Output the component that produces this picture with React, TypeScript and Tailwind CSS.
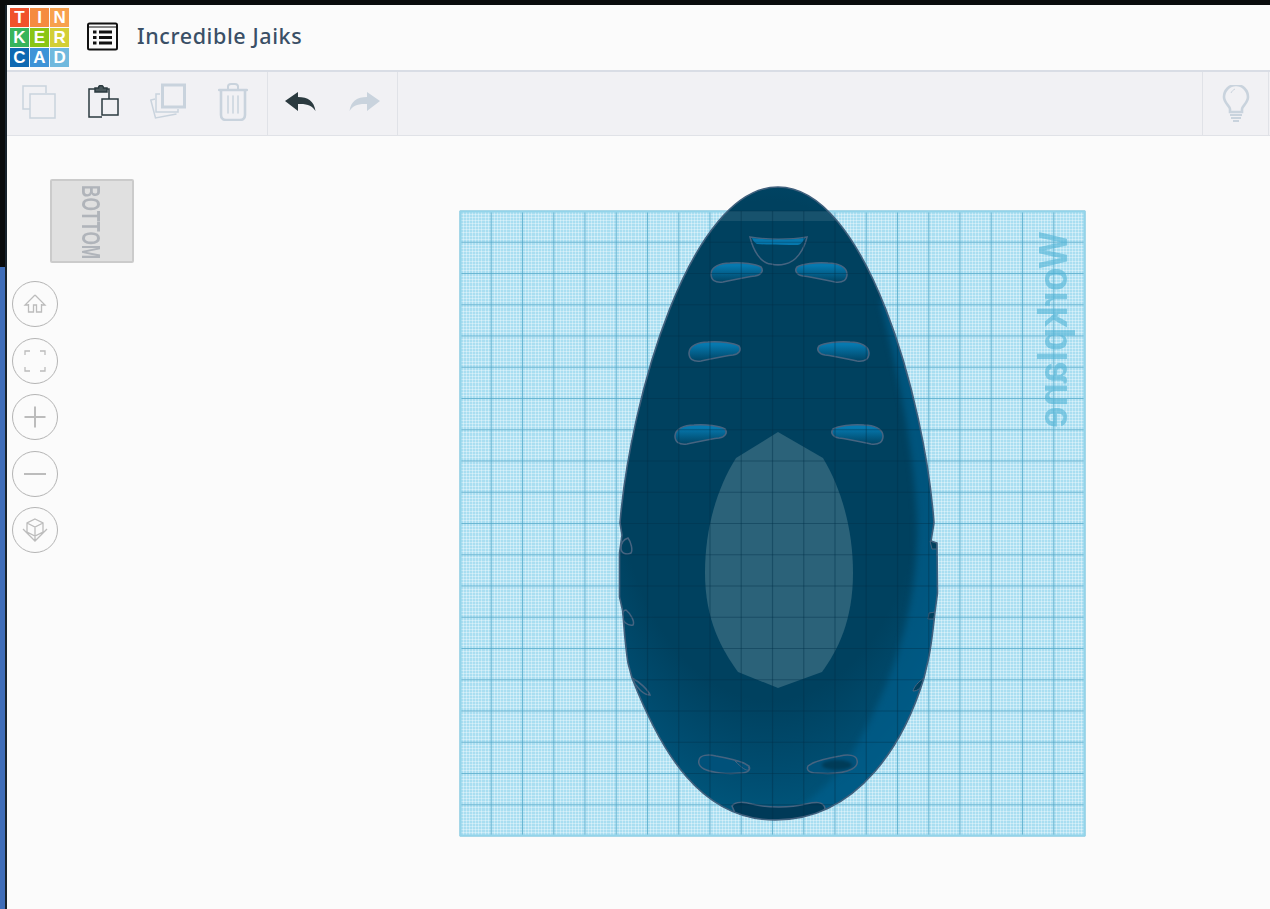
import React from 'react';

const logoCells = [
  ['T', 'bg-[#f0512b]'], ['I', 'bg-[#f58b3f]'], ['N', 'bg-[#f8a14c]'],
  ['K', 'bg-[#37b45c]'], ['E', 'bg-[#8ac513]'], ['R', 'bg-[#d3cf36]'],
  ['C', 'bg-[#0d68b2]'], ['A', 'bg-[#3e93d7]'], ['D', 'bg-[#70b9de]'],
];

const disabled = '#c9d3dd';
const active = '#2b3a3f';

function CopyIcon() {
  return (
    <svg width="34" height="34" viewBox="0 0 34 34" fill="none" stroke={disabled} strokeWidth="1.500">
      <path d="M8 24H1V1h23v7" />
      <rect x="8" y="9" width="25" height="24" />
    </svg>
  );
}

function PasteIcon() {
  return (
    <svg width="31" height="34" viewBox="0 0 31 34" fill="none" stroke={active} strokeWidth="1.500">
      <path d="M14 32H1V4h20v10" />
      <path d="M7 7V3h3.500a2.500 2.500 0 0 1 5 0H19v4z" fill="#4a585c" />
      <rect x="14" y="14" width="16" height="16" fill="#f1f1f4" />
    </svg>
  );
}

function DuplicateIcon() {
  return (
    <svg width="36" height="38" viewBox="0 0 36 38" fill="none" stroke={disabled}>
      <rect x="12.500" y="2" width="22" height="22" strokeWidth="3" />
      <path d="M10 11H6v18h22v-3" strokeWidth="1.500" />
      <path d="M5 16 0.800 17l4.700 18 21-4" strokeWidth="1.500" />
    </svg>
  );
}

function TrashIcon() {
  return (
    <svg width="30" height="38" viewBox="0 0 30 38" fill="none" stroke={disabled} strokeLinecap="round">
      <path d="M1 7h28" strokeWidth="2.400" />
      <path d="M10 6V3.500C10 2 11 1 13 1h4c2 0 3 1 3 2.500V6" strokeWidth="2" />
      <path d="M3 8v24c0 3 2 5 5 5h14c3 0 5-2 5-5V8" strokeWidth="2.600" />
      <path d="M10 13v17M15 13v17M20 13v17" strokeWidth="1.500" />
    </svg>
  );
}

function UndoIcon({ color }: { color: string }) {
  return (
    <svg width="31" height="20" viewBox="0 0 31 20" fill={color}>
      <path d="M0 9 13 0v5c10 0 16 4 17.500 14-3-5-8-7.500-17.500-7v7z" />
    </svg>
  );
}

function BulbIcon() {
  return (
    <svg width="28" height="38" viewBox="0 0 28 38" fill="none" stroke={disabled}>
      <path d="M8 27v-3c0-3-6-6-6-12a12 12 0 0 1 24 0c0 6-6 9-6 12v3z" strokeWidth="2.600" />
      <path d="M9 8c1-2 2-3 4-4" strokeWidth="1" />
      <path d="M8 30h12" strokeWidth="2" />
      <path d="M9 33h10" strokeWidth="2" />
      <path d="M11 36h6" strokeWidth="2" />
    </svg>
  );
}

function RoundButton({ children }: { children: React.ReactNode }) {
  return (
    <button className="w-[46px] h-[46px] rounded-full border border-[#b4b4b4] flex items-center justify-center bg-[#fbfbfb]">
      <svg width="28" height="28" viewBox="0 0 28 28" fill="none" stroke="#bcbcbc" strokeWidth="1.300">
        {children}
      </svg>
    </button>
  );
}

const bodyPath =
  'M778 187C866 187 925 400 934 523L931 541L937 543L937.500 593L935 612C932 640 930 655 927 665L924 678' +
  'C905 740 860 820 775 820C700 820 660 750 632 678L628 663C625 645 624 625 622.500 610L619.500 597L619.500 553' +
  'L622 535L620 523C630 400 690 187 778 187Z';

const crescentPath = 'M880 300C905 400 918 480 917 540C915 620 890 690 850 757C830 785 800 810 775 825L960 825L960 300Z';

const innerPath =
  'M778 432L736 458C716 490 705 530 705 573C705 620 722 650 738 672L778 688L822 672C838 650 853 620 853 573C853 530 842 490 823 458Z';

const dropPath = 'M711 274C711 267 720 263 730 263C742 262 756 264 761 267C764 271 761 275 755 276C745 277 733 280 723 282C715 283 711 280 711 274Z';
const drops = [
  [0, 0],
  [-22, 79],
  [-36, 162],
];

const cells = Array.from({ length: 21 }, (_, i) => i);
const minor = Array.from({ length: 201 }, (_, i) => i);

function Workplane() {
  return (
    <svg width="645" height="665" viewBox="450 180 645 665" className="ml-[336px] mt-[44px] shrink-0">
      <defs>
        <clipPath id="body">
          <path d={bodyPath} />
        </clipPath>
        <radialGradient id="shell" gradientUnits="userSpaceOnUse" cx="770" cy="450" r="390" gradientTransform="translate(770 450) scale(0.62 1) translate(-770 -450)">
          <stop offset="0.64" stopColor="#00415f" />
          <stop offset="0.85" stopColor="#004e72" />
          <stop offset="1" stopColor="#005a80" />
        </radialGradient>
        <linearGradient id="drop" x1="0" y1="0" x2="0" y2="1">
          <stop offset="0.15" stopColor="#0679af" />
          <stop offset="1" stopColor="#004464" />
        </linearGradient>
      </defs>

      {/* grid */}
      <rect x="460" y="211" width="625" height="625" fill="#a9def1" />
      <g stroke="#ffffff" strokeOpacity="0.34" strokeWidth="1" shapeRendering="crispEdges" className="blur-[0.4px]">
        {minor.map((i) => (
          <line key={`mv${i}`} x1={460 + i * 3.125} y1="211" x2={460 + i * 3.125} y2="836" />
        ))}
        {minor.map((i) => (
          <line key={`mh${i}`} x1="460" y1={211 + i * 3.125} x2="1085" y2={211 + i * 3.125} />
        ))}
      </g>
      <g stroke="#4ba4c6" strokeOpacity="0.75" strokeWidth="1">
        {cells.map((i) => (
          <line key={`v${i}`} x1={460 + i * 31.25} y1="211" x2={460 + i * 31.25} y2="836" />
        ))}
        {cells.map((i) => (
          <line key={`h${i}`} x1="460" y1={211 + i * 31.25} x2="1085" y2={211 + i * 31.25} />
        ))}
      </g>
      <rect x="460.500" y="211.500" width="624" height="624" fill="none" stroke="#93d4ea" strokeWidth="2" />
      <text
        transform="translate(1067 232) rotate(90) scale(1 -1)"
        fontFamily="'Liberation Sans', sans-serif"
        fontWeight="700"
        fontSize="40"
        textLength="196"
        lengthAdjust="spacingAndGlyphs"
        fill="#4fb2d6"
        fillOpacity="0.6"
        className="blur-[0.5px]"
      >
        Workplane
      </text>

      {/* body */}
      <path d={bodyPath} fill="url(#shell)" />
      <g clipPath="url(#body)">
        <path d={crescentPath} fill="#00608e" fillOpacity="0.65" className="blur-[3px]" />
        <rect x="460" y="211" width="625" height="10" fill="#ffffff" fillOpacity="0.09" />
        <path d={innerPath} fill="#2b6279" />

        {/* holes */}
        {drops.map(([x, y]) => (
          <g key={`d${y}`}>
            <path d={dropPath} transform={`translate(${x} ${y})`} fill="url(#drop)" stroke="#466480" strokeWidth="1.600" />
            <path d={dropPath} transform={`translate(1558 0) scale(-1 1) translate(${x} ${y})`} fill="url(#drop)" stroke="#466480" strokeWidth="1.600" />
          </g>
        ))}
        <path d="M750 237C753 250 761 264 771 264C775 265 781 265 785 264C796 262 804 250 807 237C790 240 767 240 750 237Z" fill="#004362" stroke="#466480" strokeWidth="1.500" />
        <path d="M752 238C768 240 788 240 805 238C803 242 800 245 798 245C785 245 770 245 757 244C755 243 753 241 752 238Z" fill="#0678ae" />
        <path d="M699 760C700 755 708 754 716 756C728 758 742 761 749 766C751 770 748 773 740 773C728 774 712 773 704 769C700 767 698 764 699 760Z" fill="#00517a" stroke="#466480" strokeWidth="1.500" />
        <path d="M735 761C742 761 750 765 749 770C746 771 742 768 735 761Z" fill="none" stroke="#466480" />
        <path d="M857 760C856 755 848 754 840 756C828 758 814 761 808 766C806 770 809 773 817 773C829 774 844 773 852 769C856 767 858 764 857 760Z" fill="#00517a" stroke="#466480" strokeWidth="1.500" />
        <ellipse cx="837" cy="765" rx="15" ry="5" fill="#003c58" className="blur-[1.5px]" />
        <path d="M732 806C735 801 745 802 752 804C768 808 790 808 806 804C815 802 823 801 825 808L820 820H738Z" fill="#003a58" stroke="#466480" strokeWidth="1.500" />
        <path d="M621 548C621 541 625 539 628 538C631 542 633 550 631 553C627 555 621 554 621 548Z" fill="none" stroke="#466480" strokeWidth="1.500" />
        <path d="M622 615C623 611 625 610 626 610C631 614 635 622 633 625C628 626 622 622 622 615Z" fill="none" stroke="#466480" strokeWidth="1.500" />
        <path d="M632 678C640 682 648 690 650 695C644 695 636 688 632 678Z" fill="none" stroke="#466480" strokeWidth="1.500" />
        <path d="M930 541L937 543L937 549L932 549Z" fill="#00405e" stroke="#466480" strokeWidth="1" />
        <path d="M929 613L935 612L934 619L928 619Z" fill="#00405e" stroke="#466480" strokeWidth="1" />
        <path d="M924 678C918 682 914 687 913 691C918 691 922 688 924 678Z" fill="#00405e" stroke="#466480" strokeWidth="1" />

        {/* grid seen through the body */}
        <g stroke="#002f48" strokeOpacity="0.4" strokeWidth="1.200">
          {cells.map((i) => (
            <line key={`bv${i}`} x1={460 + i * 31.25} y1="211" x2={460 + i * 31.25} y2="836" />
          ))}
          {cells.map((i) => (
            <line key={`bh${i}`} x1="460" y1={211 + i * 31.25} x2="1085" y2={211 + i * 31.25} />
          ))}
        </g>
      </g>
      <path d={bodyPath} fill="none" stroke="#40607d" strokeWidth="1.600" />
    </svg>
  );
}

export default function App() {
  return (
    <div className="flex h-[909px] w-[1270px] overflow-hidden bg-[#fbfbfb] font-['Noto_Sans',sans-serif]">
      {/* window edge */}
      <div className="w-[7px] shrink-0 flex flex-col bg-[#18232c]">
        <div className="h-[267px] w-[5px] bg-[#0a0c0d]" />
        <div className="flex-1 w-[5px] bg-[#3f6db8]" />
      </div>

      <div className="flex-1 flex flex-col min-w-0">
        <div className="h-[5px] bg-[#0a0c0d] -ml-[7px]" />

        {/* title bar */}
        <header className="h-[67px] flex items-center bg-[#fbfbfb] border-b-2 border-[#d9dde5]">
          <div className="ml-[3px] w-[59px] h-[59px] grid grid-cols-3 grid-rows-3 gap-[1.500px]">
            {logoCells.map(([letter, color]) => (
              <div key={letter} className={`${color} flex items-center justify-center text-white text-[17px] leading-none font-bold font-['Liberation_Sans',sans-serif]`}>
                {letter}
              </div>
            ))}
          </div>
          <button className="ml-[18px] mb-[3px]">
            <svg width="31" height="29" viewBox="0 0 31 29" fill="none" className="block">
              <rect x="1" y="1.500" width="29" height="26" rx="1.500" stroke="#111" strokeWidth="2" />
              <path d="M2 5h27" stroke="#111" strokeWidth="1" />
              <path d="M6 8.500h3.500v3H6zM6 14h3.500v3H6zM6 19.500h3.500v3H6z" fill="#111" />
              <path d="M12 8.500h13v3H12zM12 14h13v3H12zM12 19.500h13v3H12z" fill="#111" />
            </svg>
          </button>
          <h1 className="ml-[19px] mb-[3px] text-[21.5px] font-medium tracking-[0.6px] text-[#3a4f66]">Incredible Jaiks</h1>
        </header>

        {/* toolbar */}
        <div className="h-[64px] flex items-stretch bg-[#f1f1f4] border-b border-[#e0e2e7]">
          <div className="flex pr-[2px] pb-[3px] border-r border-[#e0e2e7]">
            <button className="w-[64.500px] flex items-center justify-center"><CopyIcon /></button>
            <button className="w-[64.500px] flex items-center justify-center"><PasteIcon /></button>
            <button className="w-[64.500px] flex items-center justify-center"><DuplicateIcon /></button>
            <button className="w-[64.500px] flex items-center justify-center"><TrashIcon /></button>
          </div>
          <div className="flex pb-[3px] border-r border-[#e0e2e7]">
            <button className="w-[64.500px] flex items-center justify-center"><UndoIcon color={active} /></button>
            <button className="w-[64.500px] flex items-center justify-center">
              <span className="-scale-x-100"><UndoIcon color={disabled} /></span>
            </button>
          </div>
          <div className="flex-1" />
          <button className="w-[67px] mr-[1px] flex items-center justify-center border-x border-[#e0e2e7]"><BulbIcon /></button>
        </div>

        {/* 3d view */}
        <div className="flex-1 flex items-start">
          <div className="w-[107px] shrink-0 flex flex-col">
            <div className="ml-[43px] mt-[43px] w-[84px] h-[84px] bg-[#e0e0e0] border-2 border-[#cbcbcb] rounded-[2px] flex justify-center pt-[4px] pr-[3px]">
              <span className="[writing-mode:vertical-rl] origin-top scale-y-[0.66] h-fit font-['Liberation_Sans',sans-serif] text-[26px] leading-none font-bold text-[#b0b4ba] blur-[0.6px]">BOTTOM</span>
            </div>
            <div className="ml-[5px] mt-[18px] flex flex-col gap-[10.500px]">
              <RoundButton>
                <path d="M14 5 4 15h3.500v-1M14 5l10 10h-3.500v-1M7.500 14v8h5v-7h3v7h5v-8" />
              </RoundButton>
              <RoundButton>
                <path d="M4 8V4h5M19 4h5v4M24 20v4h-5M9 24H4v-4" />
              </RoundButton>
              <RoundButton>
                <path d="M14 3.500v21M3.500 14h21" strokeWidth="2" />
              </RoundButton>
              <RoundButton>
                <path d="M3 14h22" strokeWidth="2" />
              </RoundButton>
              <RoundButton>
                <path d="M14 3l8 4v9l-8 4-8-4V7zM6 7l8 4 8-4M14 11v14M2 13l12 12 12-12" />
              </RoundButton>
            </div>
          </div>
          <Workplane />
        </div>
      </div>
    </div>
  );
}
